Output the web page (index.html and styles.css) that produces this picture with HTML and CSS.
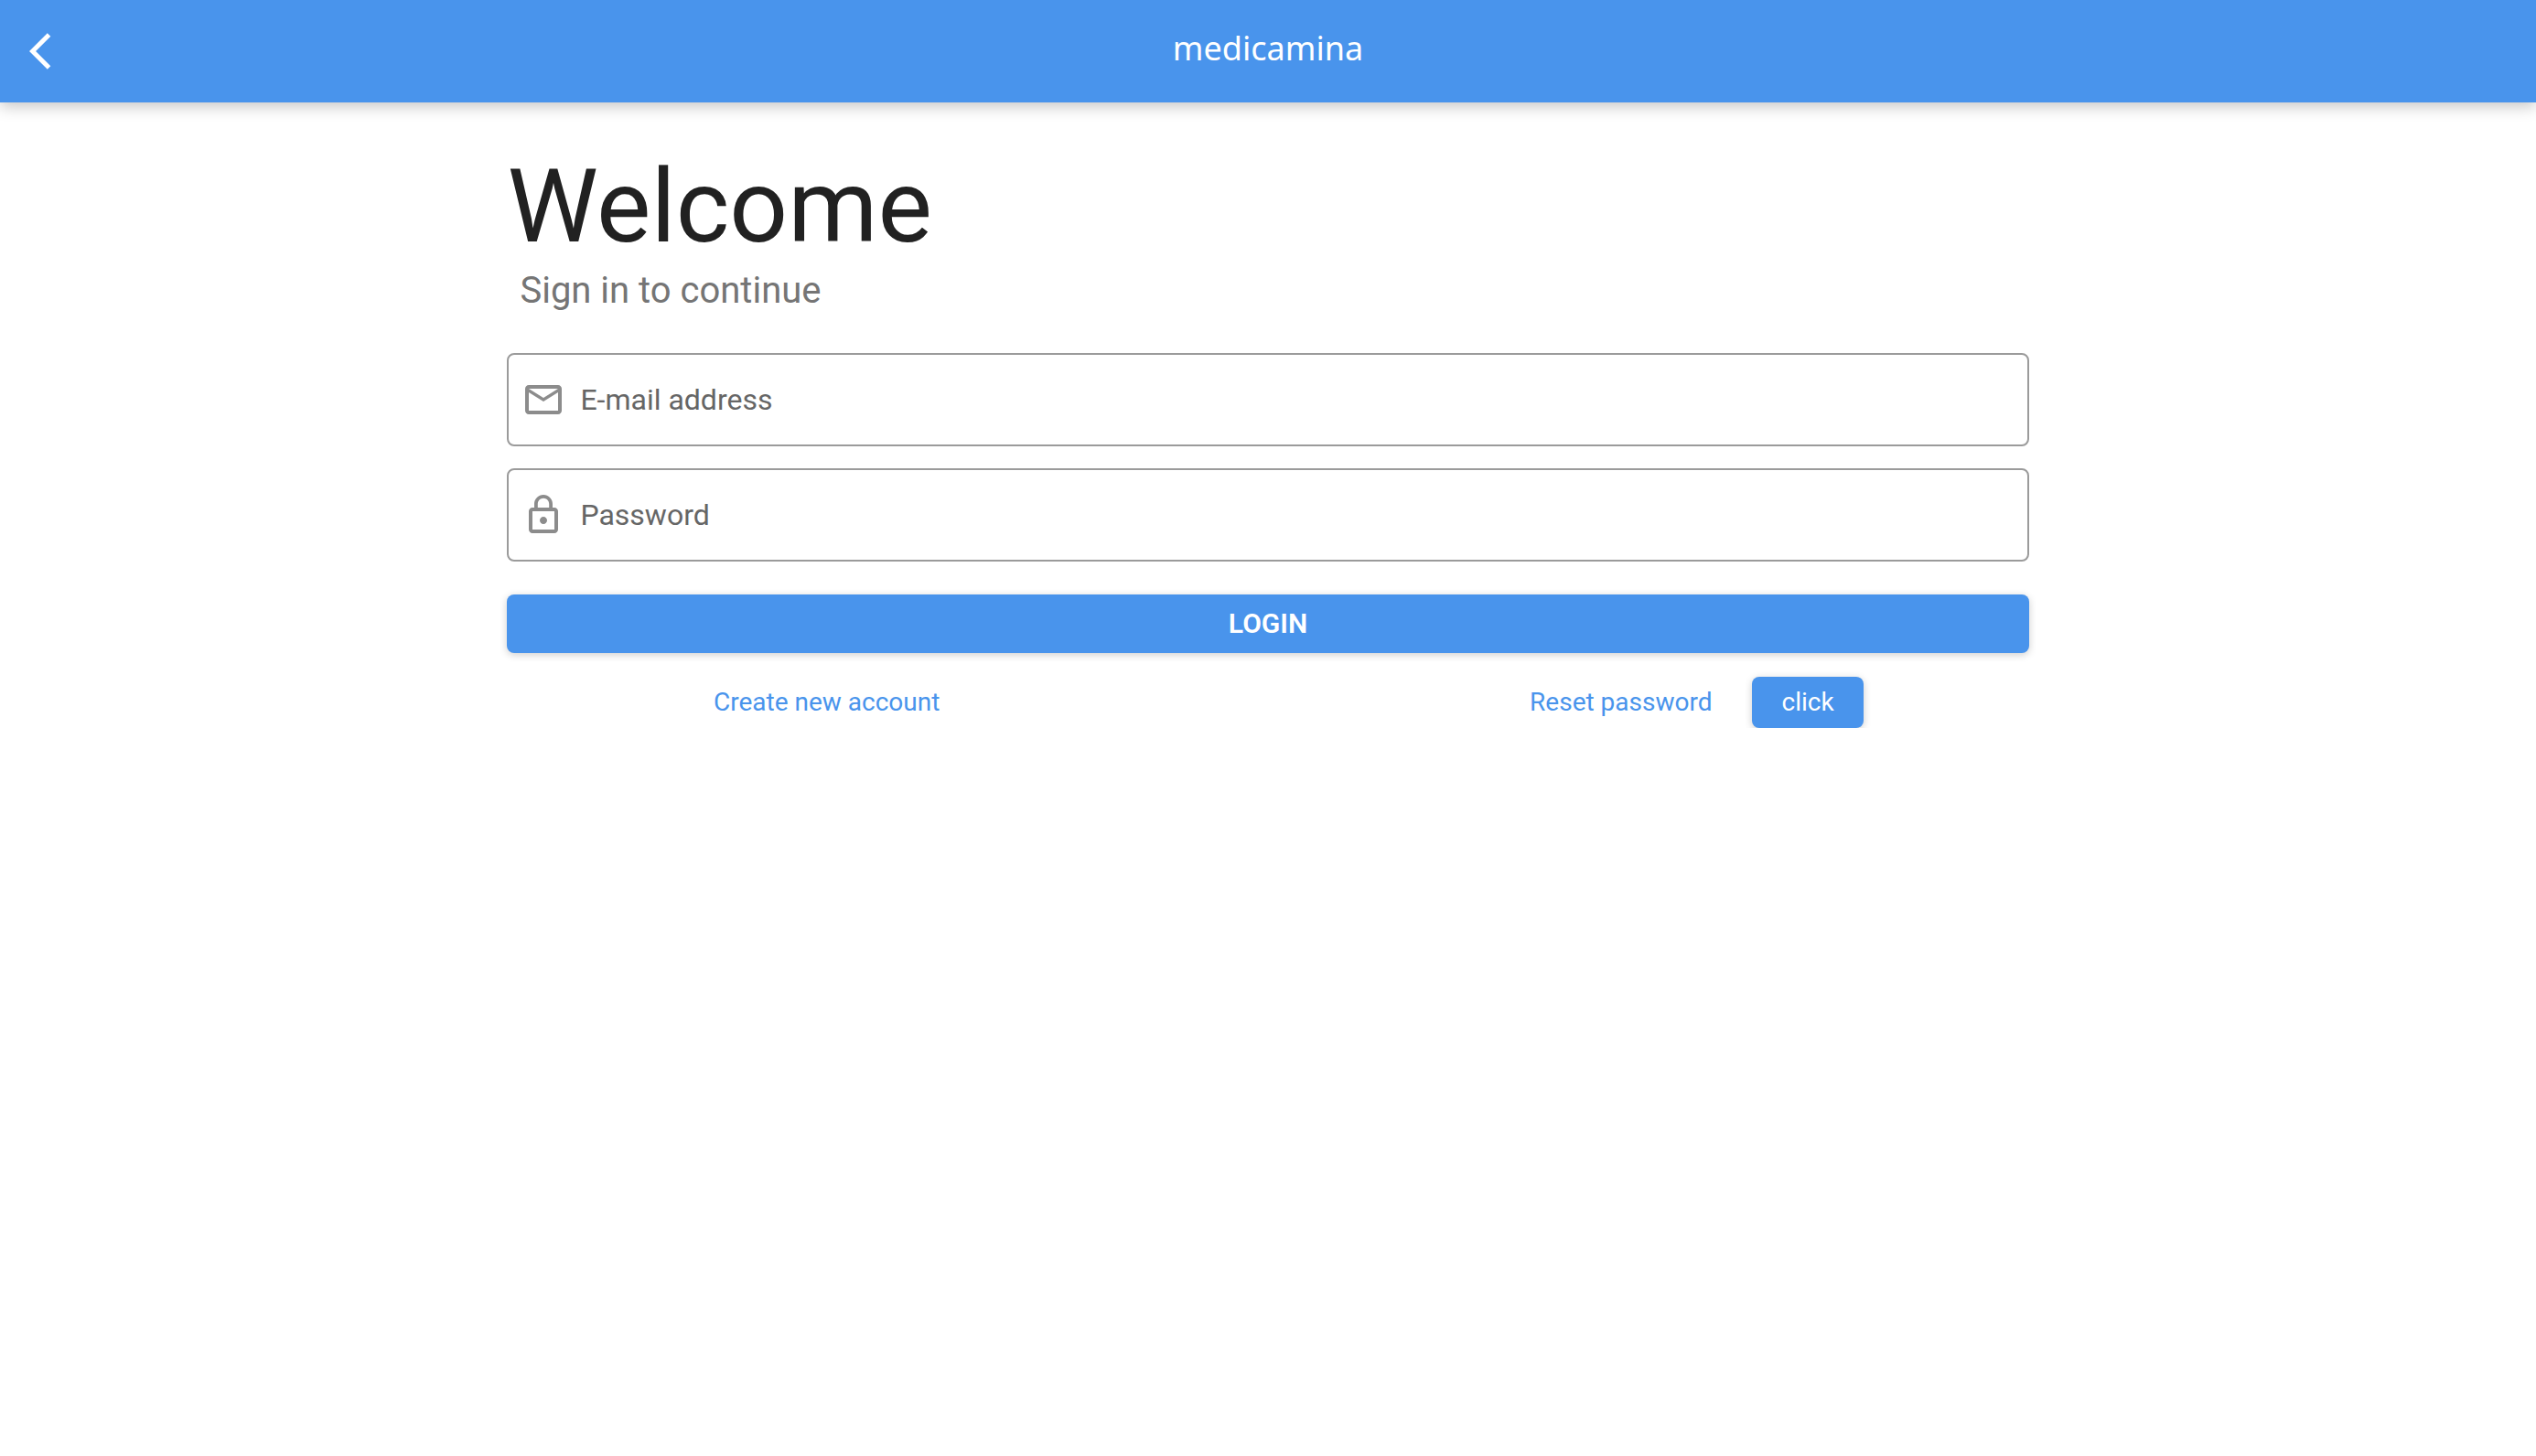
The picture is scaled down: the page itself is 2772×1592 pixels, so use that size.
FILE: index.html
```html
<!DOCTYPE html>
<html lang="en">
<head>
<meta charset="utf-8">
<meta name="viewport" content="width=device-width, initial-scale=1">
<title>medicamina</title>
<link rel="stylesheet" href="styles.css">
</head>
<body>
<header class="app-bar">
  <button class="back" type="button" aria-label="Back">
    <svg class="icon" viewBox="0 0 24 24" aria-hidden="true"><path d="M11.67 3.87L9.9 2.1 0 12l9.9 9.9 1.77-1.77L3.54 12z"/></svg>
  </button>
  <span class="brand">medicamina</span>
</header>
<main class="content">
  <h1 class="title">Welcome</h1>
  <p class="subtitle">Sign in to continue</p>
  <form class="login-form">
    <label class="field">
      <svg class="icon" viewBox="0 0 24 24" aria-hidden="true"><path d="M20 4H4c-1.100 0-1.990.9-1.990 2L2 18c0 1.100.9 2 2 2h16c1.100 0 2-.9 2-2V6c0-1.100-.9-2-2-2zm0 14H4V8l8 5 8-5v10zm-8-7L4 6h16l-8 5z"/></svg>
      <input class="field-input" type="email" placeholder="E-mail address" aria-label="E-mail address">
    </label>
    <label class="field">
      <svg class="icon" viewBox="0 0 24 24" aria-hidden="true"><path d="M18 8h-1V6c0-2.760-2.240-5-5-5S7 3.240 7 6v2H6c-1.100 0-2 .9-2 2v10c0 1.100.9 2 2 2h12c1.100 0 2-.9 2-2V10c0-1.100-.9-2-2-2zM8.900 6c0-1.710 1.390-3.100 3.100-3.100s3.100 1.390 3.100 3.100v2H8.900V6zM18 20H6V10h12v10zm-6-3c1.100 0 2-.9 2-2s-.9-2-2-2-2 .9-2 2 .9 2 2 2z"/></svg>
      <input class="field-input" type="password" placeholder="Password" aria-label="Password">
    </label>
    <button class="button login" type="submit">LOGIN</button>
    <div class="actions">
      <a class="link" href="#create">Create new account</a>
      <div class="reset">
        <a class="link" href="#reset">Reset password</a>
        <button class="button click" type="button">click</button>
      </div>
    </div>
  </form>
</main>
</body>
</html>
```
FILE: styles.css
```css
* {
  box-sizing: border-box;
}

body {
  margin: 0;
  background: #fff;
  color: #212121;
  font-family: Roboto, "Liberation Sans", sans-serif;
}

button,
input {
  border: 0;
  font: inherit;
}

.icon {
  display: block;
  flex: none;
  width: 48px;
  height: 48px;
  fill: currentColor;
}

.app-bar {
  display: grid;
  grid-template-columns: 1fr auto 1fr;
  align-items: center;
  height: 112px;
  padding: 0 32px;
  background: #4994ec;
  color: #fff;
  box-shadow: 0 4px 16px rgba(0, 0, 0, 0.24);
}

.back {
  justify-self: start;
  padding: 0;
  background: none;
  color: inherit;
}

.brand {
  padding-bottom: 6px;
  font-family: "Noto Sans", sans-serif;
  font-size: 36px;
  line-height: 48px;
}

.content {
  width: 60%;
  margin: 0 auto;
  padding-top: 50px;
}

.title {
  margin: 0;
  font-size: 112px;
  font-weight: 400;
  line-height: 128px;
}

.subtitle {
  margin: 0 0 40px;
  padding-left: 14px;
  color: #757575;
  font-size: 40px;
  line-height: 56px;
}

.login-form {
  display: flex;
  flex-direction: column;
}

.field {
  display: flex;
  align-items: center;
  gap: 16px;
  height: 102px;
  margin-bottom: 24px;
  padding: 0 14px;
  border: 2px solid #9b9b9b;
  border-radius: 8px;
  color: #8c8c8c;
}

.field-input {
  flex: 1;
  min-width: 0;
  padding: 0;
  background: none;
  color: #212121;
  font-size: 32px;
  line-height: 40px;
  outline: 0;
}

.field-input::placeholder {
  color: #666;
  opacity: 1;
}

.button {
  border-radius: 8px;
  background: #4994ec;
  color: #fff;
  font-size: 28px;
  line-height: 32px;
  box-shadow: 0 2px 8px rgba(0, 0, 0, 0.2);
}

.login {
  height: 64px;
  margin-top: 12px;
  font-size: 30px;
  font-weight: 600;
}

.actions {
  display: grid;
  grid-template-columns: 42% 1fr;
  align-items: center;
  margin-top: 26px;
}

.link {
  justify-self: center;
  color: #4994ec;
  font-size: 28px;
  line-height: 32px;
  text-decoration: none;
}

.reset {
  display: flex;
  align-items: center;
  justify-content: flex-end;
  gap: 44px;
  padding-right: 181px;
}

.click {
  height: 56px;
  padding: 0 32px;
}
```
